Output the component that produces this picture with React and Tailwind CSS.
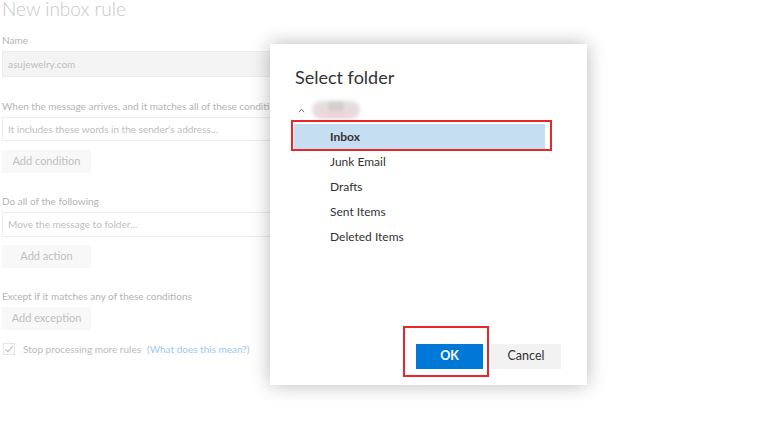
export default function App() {
  const font = { fontFamily: 'Lato, "Noto Sans", sans-serif' };
  const folders = ["Junk Email", "Drafts", "Sent Items", "Deleted Items"];
  return (
    <div className="relative h-[433px] w-[767px] overflow-hidden bg-white" style={font}>
      {/* Rule form, dimmed behind the dialog */}
      <div className="flex flex-col pl-[2px] text-[#b4b4b4]">
        <div className="mt-[-2px] text-[19px] font-light leading-[22px] text-[#c8c8c8]">New inbox rule</div>
        <div className="mt-[13px] text-[10px] leading-[14px]">Name</div>
        <div className="mt-[4px] flex h-[26px] w-[300px] items-center border border-[#ececec] bg-[#f4f4f4] pl-[5px] text-[10px] text-[#bdbdbd]">
          asujewelry.com
        </div>
        <div className="mt-[22px] whitespace-nowrap text-[10px] leading-[14px]">
          When the message arrives, and it matches all of these conditions
        </div>
        <div className="mt-[4px] flex h-[24px] w-[300px] items-center border border-[#ececec] bg-white pl-[5px] text-[10px] text-[#c0c0c0]">
          It includes these words in the sender's address...
        </div>
        <div className="mt-[9px] flex h-[23px] w-[89px] items-center justify-center bg-[#f8f8f8] text-[11px] text-[#c0c0c0]">
          Add condition
        </div>
        <div className="mt-[21px] text-[10px] leading-[14px]">Do all of the following</div>
        <div className="mt-[4px] flex h-[25px] w-[300px] items-center border border-[#ececec] bg-white pl-[5px] text-[10px] text-[#c0c0c0]">
          Move the message to folder...
        </div>
        <div className="mt-[8px] flex h-[23px] w-[89px] items-center justify-center bg-[#f8f8f8] text-[11px] text-[#c0c0c0]">
          Add action
        </div>
        <div className="mt-[21px] text-[10px] leading-[14px]">Except if it matches any of these conditions</div>
        <div className="mt-[4px] flex h-[23px] w-[89px] items-center justify-center bg-[#f8f8f8] text-[11px] text-[#c0c0c0]">
          Add exception
        </div>
        <div className="mt-[12px] flex h-[14px] items-center text-[10px]">
          <div className="ml-[1px] flex h-[12px] w-[12px] items-center justify-center border border-[#e4e4e4]">
            <svg width="10" height="10" viewBox="0 0 10 10">
              <path d="M1.5 5.2 L4 7.6 L8.8 2" fill="none" stroke="#c4c4c4" strokeWidth="1.2" />
            </svg>
          </div>
          <span className="ml-[8px] text-[#bcbcbc]">Stop processing more rules</span>
          <span className="ml-[6px] text-[#9ec9ec]">(What does this mean?)</span>
        </div>
      </div>

      {/* Select folder dialog */}
      <div className="absolute left-[270px] top-[44px] h-[341px] w-[317px] bg-white shadow-[0_0_18px_rgba(0,0,0,0.28)]">
        <div className="pl-[25px] pt-[21px] text-[18px] leading-[24px] text-[#333333]">Select folder</div>
        <div className="relative mt-[16px] h-[12px]">
          <svg className="absolute left-[28px] top-[3px]" width="7" height="5" viewBox="0 0 7 5">
            <path d="M0.8 4.2 L3.5 1.2 L6.2 4.2" fill="none" stroke="#666" strokeWidth="1" />
          </svg>
          <div className="absolute left-[42px] top-[-4px] h-[17px] w-[48px] rounded-full bg-[#e3dede] blur-[2px]" />
          <div className="absolute left-[58px] top-[-3px] h-[14px] w-[16px] bg-[#d2cfcf] blur-[1.5px]" />
          <div className="absolute left-[46px] top-[6px] h-[6px] w-[40px] rounded-full bg-[#f0d4d8] blur-[2px]" />
        </div>
        <div className="ml-[24px] mt-[7px] flex w-[251px] flex-col text-[12px] text-[#333333]">
          <div className="flex h-[25px] items-center bg-[#c6def2] pl-[36px] font-bold">Inbox</div>
          {folders.map((f) => (
            <div key={f} className="flex h-[25px] items-center pl-[36px]">
              {f}
            </div>
          ))}
        </div>
        <div className="absolute left-[21px] top-[76px] h-[31px] w-[261px] border-2 border-[#e8262b]" />
        <div className="absolute left-[146px] top-[300px] flex gap-[8px]">
          <div className="flex h-[25px] w-[67px] items-center justify-center bg-[#0078d7] text-[12.5px] font-bold text-white">OK</div>
          <div className="flex h-[25px] w-[70px] items-center justify-center bg-[#f2f2f2] text-[12.5px] text-[#333333]">Cancel</div>
        </div>
        <div className="absolute left-[133px] top-[282px] h-[51px] w-[86px] border-2 border-[#e8262b]" />
      </div>
    </div>
  );
}
